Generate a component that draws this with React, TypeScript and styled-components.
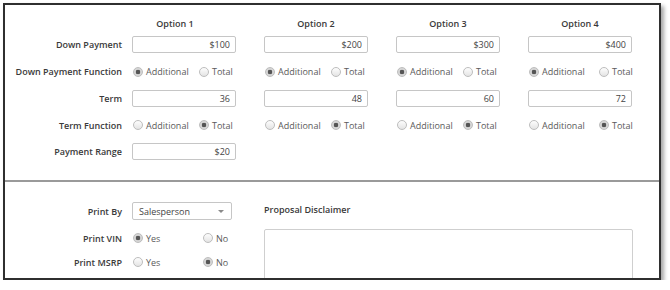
import styled, { createGlobalStyle } from "styled-components";

const GlobalStyle = createGlobalStyle`
  body {
    margin: 0;
    background: #ffffff;
    font-family: "Open Sans", "Liberation Sans", sans-serif;
  }
`;

type Choice = "additional" | "total";

const options = [
  { name: "Option 1", down: "$100", downFn: "additional" as Choice, term: "36", termFn: "total" as Choice },
  { name: "Option 2", down: "$200", downFn: "additional" as Choice, term: "48", termFn: "total" as Choice },
  { name: "Option 3", down: "$300", downFn: "additional" as Choice, term: "60", termFn: "total" as Choice },
  { name: "Option 4", down: "$400", downFn: "additional" as Choice, term: "72", termFn: "total" as Choice },
];

const Radio = ({ checked, label }: { checked: boolean; label: string }) => (
  <RadioItem>
    <RadioDot $checked={checked} />
    <RadioText>{label}</RadioText>
  </RadioItem>
);

const App = () => {
  return (
    <>
      <GlobalStyle />
      <Frame>
        <OptionsGrid>
          <span />
          {options.map((o, i) => (
            <Header key={o.name} $first={i === 0}>
              {o.name}
            </Header>
          ))}

          <Label>Down Payment</Label>
          {options.map((o) => (
            <Cell key={o.name}>
              <Field readOnly value={o.down} />
            </Cell>
          ))}

          <Label>Down Payment Function</Label>
          {options.map((o) => (
            <Cell key={o.name}>
              <Radio checked={o.downFn === "additional"} label="Additional" />
              <Radio checked={o.downFn === "total"} label="Total" />
            </Cell>
          ))}

          <Label>Term</Label>
          {options.map((o) => (
            <Cell key={o.name}>
              <Field readOnly value={o.term} />
            </Cell>
          ))}

          <Label>Term Function</Label>
          {options.map((o) => (
            <Cell key={o.name}>
              <Radio checked={o.termFn === "additional"} label="Additional" />
              <Radio checked={o.termFn === "total"} label="Total" />
            </Cell>
          ))}

          <Label>Payment Range</Label>
          <Cell>
            <Field readOnly value="$20" />
          </Cell>
        </OptionsGrid>

        <Divider />

        <PrintSection>
          <PrintGrid>
            <PrintLabel $h={18}>Print By</PrintLabel>
            <Select>
              <span>Salesperson</span>
              <Caret />
            </Select>

            <PrintLabel $h={24} $top={6}>Print VIN</PrintLabel>
            <PrintCell $top={6}>
              <Radio checked label="Yes" />
              <Radio checked={false} label="No" />
            </PrintCell>

            <PrintLabel $h={24}>Print MSRP</PrintLabel>
            <PrintCell>
              <Radio checked={false} label="Yes" />
              <Radio checked label="No" />
            </PrintCell>
          </PrintGrid>

          <Disclaimer>
            <DisclaimerTitle>Proposal Disclaimer</DisclaimerTitle>
            <TextBox />
          </Disclaimer>
        </PrintSection>
      </Frame>
    </>
  );
};

export default App;

const Frame = styled.div`
  margin: 3px 0 0 3px;
  width: 658px;
  height: 277px;
  box-sizing: border-box;
  border: 2px solid #2f2f2f;
  box-shadow: 3px 3px 4px rgba(0, 0, 0, 0.35);
  overflow: hidden;
  background: #fff;
`;

const OptionsGrid = styled.div`
  display: grid;
  grid-template-columns: 127px repeat(3, 132px) 1fr;
  grid-template-rows: 16px repeat(5, 26.75px);
  padding: 10.5px 0 14.75px;
`;

const Header = styled.div<{ $first?: boolean }>`
  width: 104px;
  box-sizing: border-box;
  padding-right: ${(p) => (p.$first ? "18px" : "0")};
  text-align: center;
  font-size: 9px;
  font-weight: 600;
  color: #3a3a3a;
  line-height: 16px;
`;

const Label = styled.div`
  padding-right: 10px;
  text-align: right;
  font-size: 9px;
  font-weight: 600;
  color: #3a3a3a;
  display: flex;
  align-items: center;
  justify-content: flex-end;
`;

const Cell = styled.div`
  display: flex;
  align-items: center;
`;

const Field = styled.input`
  width: 104px;
  height: 17px;
  box-sizing: border-box;
  border: 1px solid #c6c6c6;
  border-radius: 2px;
  padding: 0 5px;
  text-align: right;
  font-family: "Open Sans", "Liberation Sans", sans-serif;
  font-size: 9px;
  color: #444;
  outline: none;
`;

const RadioItem = styled.div`
  width: 70px;
  display: flex;
  align-items: center;
  padding-left: 1px;
  box-sizing: border-box;
`;

const RadioDot = styled.span<{ $checked: boolean }>`
  width: 10px;
  height: 10px;
  box-sizing: border-box;
  border-radius: 50%;
  border: 1px solid #bdbdbd;
  background: ${(p) =>
    p.$checked
      ? "radial-gradient(circle, #555 0 2px, #d6d6d6 2.6px)"
      : "linear-gradient(#fdfdfd, #e4e4e4)"};
  flex-shrink: 0;
`;

const RadioText = styled.span`
  margin-left: 3px;
  font-size: 9px;
  color: #5a5a5a;
`;

const Divider = styled.div`
  border-top: 2px solid #9a9a9a;
`;

const PrintSection = styled.div`
  display: flex;
  padding-top: 20px;
`;

const PrintGrid = styled.div`
  width: 259px;
  display: grid;
  grid-template-columns: 127px 1fr;
  align-content: start;
`;

const PrintLabel = styled.div<{ $h: number; $top?: number }>`
  height: ${(p) => p.$h}px;
  margin-top: ${(p) => p.$top ?? 0}px;
  padding-right: 10px;
  display: flex;
  align-items: center;
  justify-content: flex-end;
  font-size: 9px;
  font-weight: 600;
  color: #3a3a3a;
`;

const PrintCell = styled.div<{ $top?: number }>`
  height: 24px;
  margin-top: ${(p) => p.$top ?? 0}px;
  display: flex;
  align-items: center;
`;

const Select = styled.div`
  width: 100px;
  height: 18px;
  box-sizing: border-box;
  border: 1px solid #c6c6c6;
  border-radius: 2px;
  padding: 0 7px 0 6px;
  display: flex;
  align-items: center;
  justify-content: space-between;
  font-size: 9px;
  color: #444;
`;

const Caret = styled.span`
  width: 0;
  height: 0;
  border-left: 3px solid transparent;
  border-right: 3px solid transparent;
  border-top: 3px solid #8a8a8a;
  margin-top: 1px;
`;

const Disclaimer = styled.div`
  flex: 1;
  padding-top: 1px;
`;

const DisclaimerTitle = styled.div`
  font-size: 9px;
  font-weight: 600;
  color: #3a3a3a;
  line-height: 14px;
  margin-bottom: 12px;
`;

const TextBox = styled.div`
  width: 369px;
  height: 80px;
  box-sizing: border-box;
  border: 1px solid #cfcfcf;
  border-radius: 2px;
`;
